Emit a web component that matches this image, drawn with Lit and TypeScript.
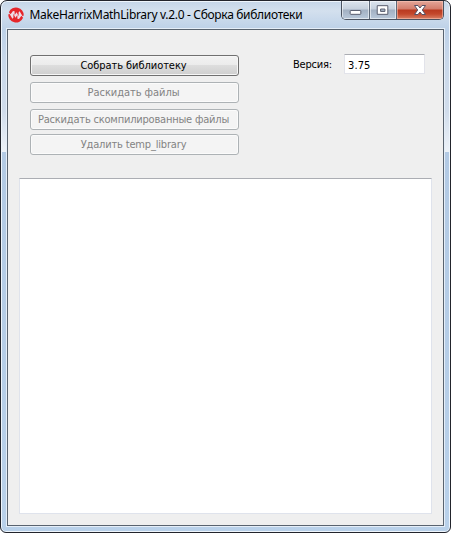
import { LitElement, html, css } from "lit";
import { customElement } from "lit/decorators.js";

@customElement("app-root")
export class AppRoot extends LitElement {
  static styles = css`
    :host { display: block; width: 451px; height: 533px; background: #fff; overflow: hidden; }
    * { box-sizing: border-box; }
    .window {
      width: 451px; height: 533px; display: flex; flex-direction: column;
      border: 1px solid #22242c; border-radius: 7px 7px 6px 6px; padding: 0 6px 6px;
      box-shadow: inset 0 0 0 1px #eef5fc;
      background:
        linear-gradient(180deg, #c4d5e8 0, #d3e0ee 10px, #bdd1e8 28px, #c9d8ea 60px, #d0dceb 110px, #edf2f8 151px, #b3cae4 151px, #b9d1ea 100%);
    }
    .bar { height: 28px; display: flex; align-items: flex-start; padding-left: 1px; flex: none; }
    .logo { width: 16px; height: 16px; margin-top: 6px; flex: none; }
    .title { font: 12px/16px "Noto Sans", "Open Sans", sans-serif; letter-spacing: -0.32px; color: #000; margin: 6px 0 0 5.5px; white-space: pre; flex: 1; }
    .caption {
      display: flex; width: 103px; height: 19px; flex: none;
      border: 1px solid #4a5260; border-top: 0; border-radius: 0 0 5px 5px; overflow: hidden;
    }
    .cap { width: 28px; display: flex; border-right: 1px solid #5d6878; box-shadow: inset 0 0 0 1px rgba(255,255,255,.55);
      background: linear-gradient(#dce4ee 0, #c6d0dd 8px, #a2b0c2 9px, #b9c8da 100%); }
    .cap.max { width: 27px; }
    .cap.close { width: 46px; border-right: 0; box-shadow: inset 0 0 0 1px rgba(255,205,190,.5);
      background: linear-gradient(#e4a699 0, #d37d6c 8px, #b93a20 9px, #c3482c 13px, #d98065 100%); }
    .cap svg { width: 100%; height: 18px; display: block; }
    .client {
      flex: 1; border: 1px solid #59636f; background: #efefef; display: flex; flex-direction: column;
      padding: 25px 11px 11px; box-shadow: 0 0 0 1px #e5eef8;
    }
    .form { display: flex; height: 123px; flex: none; }
    .buttons { width: 209px; margin-left: 11px; display: flex; flex-direction: column; }
    .btn {
      font: 11px/19px "DejaVu Sans Condensed", "DejaVu Sans", sans-serif; height: 21px; padding: 0 2px 0 0;
      border: 1px solid #adb2b5; border-radius: 3px; background: #f4f4f4; color: #838383; text-align: center;
      box-shadow: inset 0 0 0 1px #fbfbfb; margin: 0 0 6px; white-space: nowrap;
    }
    .btn.primary { border-color: #707070; color: #000; background: linear-gradient(#f2f2f2 0, #ebebeb 50%, #dddddd 50%, #cfcfcf 100%); box-shadow: inset 0 0 0 1px #f6f6f6; }
    .btn.third { margin-bottom: 4px; }
    .a { letter-spacing: -0.06px; } .b { letter-spacing: -0.05px; } .c { letter-spacing: -0.2px; } .d { letter-spacing: -0.17px; }
    .label { font: 11px/20px "DejaVu Sans Condensed", "DejaVu Sans", sans-serif; letter-spacing: -0.2px; margin-left: 54px; width: 51px; }
    .field {
      font: 11px/19px "DejaVu Sans Condensed", "DejaVu Sans", sans-serif; letter-spacing: 0.1px; color: #000;
      width: 81px; height: 20px; margin-top: -1px; padding: 2px 0 0 3px; background: #fff;
      border: 1px solid #e2e3ea; border-top-color: #abadb3; border-radius: 1px; outline: none;
    }
    .log { flex: 1; background: #fff; border: 1px solid #dfe3ec; border-top-color: #abadb3; }
  `;

  render() {
    return html`
      <div class="window">
        <div class="bar">
          <svg class="logo" viewBox="0 0 16 16" fill="#e5262b">
            <circle cx="8" cy="8" r="7" fill="#ecdde6" />
            <path d="M.9 5.2A7.7 7.7 0 0 1 15.7 8.6L14.6 9.3 11.6 4.2 10.6 5.2V9.2L8.6 5.2 6.6 8V4.2L5 3.9 2.6 7.2Z" />
            <path d="M15.1 10.8A7.7 7.7 0 0 1 .3 7.4L1.4 6.7 4.4 11.8 5.4 10.8V6.8L7.4 10.8 9.4 8V11.8L11 12.1 13.4 8.8Z" />
          </svg>
          <div class="title">MakeHarrixMathLibrary v.2.0 - Сборка библиотеки</div>
          <div class="caption">
            <div class="cap"><svg viewBox="0 0 28 18"><rect x="8.5" y="9.5" width="11" height="4" rx=".7" fill="#fff" stroke="#555a6b" /></svg></div>
            <div class="cap max"><svg viewBox="0 0 27 18"><path d="M7.5 4.5H18.5V13.5H7.5ZM11 8V10.5H15.5V8Z" fill="#fff" fill-rule="evenodd" stroke="#555a6b" stroke-linejoin="round" /></svg></div>
            <div class="cap close"><svg viewBox="0 0 46 18"><path d="M17.5 4.5H21L23 7 25 4.5H28.5L25.3 9 28.5 13.5H25L23 11 21 13.5H17.5L20.7 9Z" fill="#fff" stroke="#565064" stroke-linejoin="round" /></svg></div>
          </div>
        </div>
        <div class="client">
          <div class="form">
            <div class="buttons">
              <button class="btn primary a">Собрать библиотеку</button>
              <button class="btn b" disabled>Раскидать файлы</button>
              <button class="btn third c" disabled>Раскидать скомпилированные файлы</button>
              <button class="btn d" disabled>Удалить temp_library</button>
            </div>
            <div class="label">Версия:</div>
            <input class="field" value="3.75" />
          </div>
          <div class="log"></div>
        </div>
      </div>
    `;
  }
}
